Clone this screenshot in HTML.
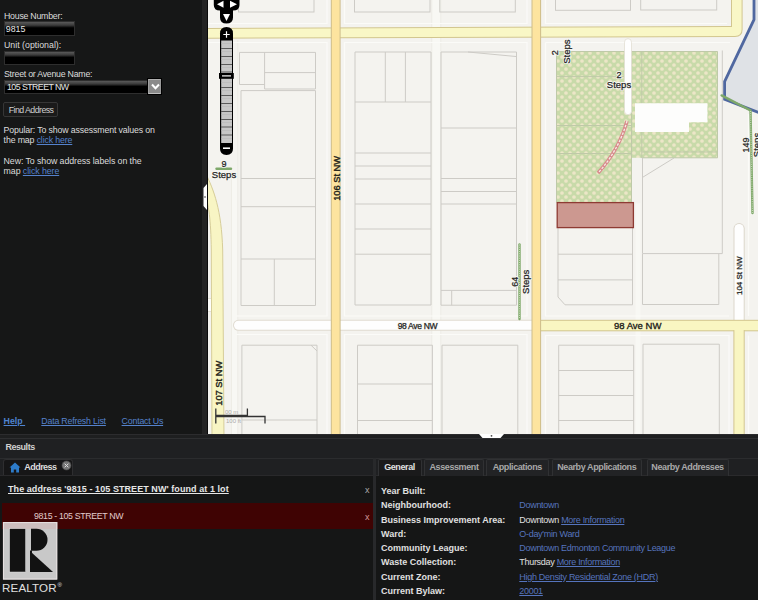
<!DOCTYPE html>
<html><head><meta charset="utf-8">
<style>
*{box-sizing:border-box}
html,body{margin:0;padding:0}
body{width:758px;height:600px;overflow:hidden;background:#1a1a1a;position:relative;font-family:"Liberation Sans",sans-serif;color:#d8d8d8}
.a{position:absolute;white-space:nowrap}
#left{position:absolute;left:0;top:0;width:202px;height:434px;background:#161717}
#sep{position:absolute;left:202px;top:0;width:6px;height:434px;background:#232323;border-right:1px solid #0a0a0a}
.lbl{font-size:8.8px;line-height:10px;color:#dcdcdc}
.inp{position:absolute;left:4px;width:71px;height:15px;border:1px solid #2e2e2e;background:linear-gradient(#5a5a5a 0,#3a3a3a 25%,#000 45%,#000 100%)}
.lnk{color:#5582cc;text-decoration:underline}
#map{position:absolute;left:208px;top:0}
#bottom{position:absolute;left:0;top:434px;width:758px;height:166px;background:#151515}
.tab{position:absolute;top:458.5px;height:17.5px;background:#222325;border:1px solid #303133;border-bottom:none;border-radius:2px 2px 0 0;font-size:9px;font-weight:bold;color:#a9a9a9;text-align:center;line-height:15px;letter-spacing:-0.4px}
.tab.act{background:#1a1a1b;color:#e0e0e0}
.det{font-size:9px;font-weight:bold;color:#e0e0e0;line-height:14.3px}
.val{font-size:9px;color:#e0e0e0;line-height:14.3px;letter-spacing:-0.3px}
.bl{color:#5574bd}
.u{text-decoration:underline}
</style></head><body>
<div id="left">
  <div class="a lbl" style="left:4px;top:11px;letter-spacing:-0.25px">House Number:</div>
  <div class="inp" style="top:20.5px;height:15px"></div>
  <div class="a lbl" style="left:5.8px;top:23.5px;color:#e8e8e8">9815</div>
  <div class="a lbl" style="left:4px;top:40px;letter-spacing:0px">Unit (optional):</div>
  <div class="inp" style="top:50.5px;height:14px"></div>
  <div class="a lbl" style="left:4px;top:69px;letter-spacing:-0.25px">Street or Avenue Name:</div>
  <div class="inp" style="top:80px;width:157px;height:14px"></div>
  <div class="a lbl" style="left:7px;top:82px;color:#e8e8e8;letter-spacing:-0.55px">105 STREET NW</div>
  <div class="a" style="left:148.4px;top:79px;width:12.7px;height:15.4px;background:#8a8a8a;border:1px solid #aaa;border-color:#b0b0b0 #9a9a9a #c0c0c0 #a0a0a0;box-shadow:0 0 0 1px #000"></div>
  <svg class="a" style="left:150.5px;top:83px" width="9" height="7"><path d="M1 1.5 L4.5 5.2 L8 1.5" stroke="#fff" stroke-width="2" fill="none"/></svg>
  <div class="a" style="left:3px;top:102px;width:54.5px;height:14.5px;border:1px solid #363636;background:#1a1a1a;border-radius:2px"></div>
  <div class="a lbl" style="left:8.7px;top:105px;color:#cfcfcf;letter-spacing:-0.55px">Find Address</div>
  <div class="a lbl" style="left:3.6px;top:125px;letter-spacing:-0.15px">Popular: To show assessment values on<br>the map <span class="lnk">click here</span></div>
  <div class="a lbl" style="left:3.6px;top:156px;letter-spacing:-0.08px">New: To show address labels on the<br>map <span class="lnk">click here</span></div>
  <div class="a lbl" style="left:3.6px;top:416px;color:#4f84d0;font-weight:bold;text-decoration:underline">Help&nbsp;</div>
  <div class="a lbl lnk" style="left:41.3px;top:416px;letter-spacing:-0.2px">Data Refresh List</div>
  <div class="a lbl lnk" style="left:121.6px;top:416px;letter-spacing:-0.2px">Contact Us</div>
</div>
<div id="sep"></div>
<svg class="a" style="left:202px;top:184px" width="6" height="26"><path d="M5 0 L1.5 4 L1.5 22 L5 26 Z" fill="#fff"/><circle cx="3" cy="13" r="0.8" fill="#333"/></svg>

<svg id="map" width="550" height="434" viewBox="208 0 550 434">
  <defs>
    <pattern id="park" x="556" y="51" width="8" height="8" patternUnits="userSpaceOnUse">
      <rect width="8" height="8" fill="#c8daa9"/>
      <circle cx="2" cy="2" r="1.85" fill="#ece6c7"/>
      <circle cx="6" cy="6" r="1.85" fill="#ece6c7"/>
    </pattern>
    <filter id="soft" x="-2%" y="-2%" width="104%" height="104%"><feGaussianBlur stdDeviation="0.45"/></filter>
    <clipPath id="parkclip"><rect x="556.5" y="51.2" width="161.2" height="151.2"/></clipPath>
    <pattern id="grip" x="0" y="0" width="2" height="2" patternUnits="userSpaceOnUse">
      <rect width="2" height="2" fill="#c4c4c4"/>
      <rect width="1" height="1" fill="#a8a8a8"/>
    </pattern>
  </defs>
  <rect x="208" y="0" width="550" height="434" fill="#f4f3ef"/>
  <!-- river/area top-right -->
  <path d="M754 -2 L754 19.7 L724.6 81.6 L724.6 99.3 L760 113 L760 -2 Z" fill="#dfe2e6" stroke="#5068a0" stroke-width="2.8"/>
  <!-- faint sidewalk / block edge lines -->
  <g fill="#f8f8f4">
    <rect x="232" y="176" width="5.5" height="258"/>
    <rect x="432" y="0" width="8.5" height="434"/>
    <rect x="635.5" y="157.8" width="5" height="276.2"/>
  </g>
  <g stroke="#ebe9e3" stroke-width="0.7" fill="none">
    <path d="M231.5 176 V434 M237.8 40 V434 M431.8 0 V434 M440.8 0 V434 "/>
  </g>
  <g stroke="#fbfbf8" stroke-width="1.2" fill="none">
    <path d="M208 23.5 H327 V0 M208 42.5 H327 V316 H236.5"/>
    <path d="M236.5 334.5 H327 V434"/>
    <path d="M344.5 0 V23.5 H527 V0 M344.5 42.5 H527 V316 H344.5 Z"/>
    <path d="M344.5 434 V334.5 H527 V434"/>
    <path d="M545.5 0 V23.5 H727 M545.5 42.5 H730 M545.5 42.5 V316 H729 M545.5 434 V335.5 H729 V434"/>
    <path d="M748.5 114 V316 M748.5 335.5 V434"/>
  </g>
  <!-- park -->
  <g clip-path="url(#parkclip)"><rect x="556.5" y="51.2" width="161.2" height="151.2" fill="url(#park)" filter="url(#soft)"/></g>
  <rect x="631.5" y="157.8" width="87.5" height="45.5" fill="#f4f3ef"/>
  <g stroke="#bfc9a8" stroke-width="1" fill="none">
    <path d="M556.5 51.5 H717.5 V157.8 H641.8 M556.5 76.6 H631.5 M556.5 125.5 H631.5 M556.5 153.5 H631.5 M641.8 51.5 V157.8 M631.5 51.5 V202.4 M641.8 152 H717.5 M556.5 51.5 V202.4"/>
  </g>
  <!-- white path in park -->
  <rect x="624.5" y="38.7" width="7" height="76" rx="3.5" fill="#fefefe" stroke="#e2ded3" stroke-width="0.8"/>
  <!-- building -->
  <path d="M635 103.2 H707.4 V122.2 H689 V131.9 H635 Z" fill="#fdfdfc"/>
  <!-- red dashed path -->
  <path d="M627 121 Q619 150 598 173" stroke="#d98a8c" stroke-width="3.4" fill="none"/>
  <path d="M627 121 Q619 150 598 173" stroke="#f6ece6" stroke-width="1.3" stroke-dasharray="2.5 1.5" fill="none"/>
  <!-- lot lines -->
  <g stroke="#cdcbc6" stroke-width="1" fill="none">
    <rect x="238.5" y="-2" width="75.5" height="14"/>
    <rect x="354.5" y="-2" width="75.5" height="14"/>
    <rect x="439.8" y="-2" width="75.5" height="14"/>
    <rect x="555.5" y="-2" width="75" height="12.3"/>
    <rect x="640.7" y="-2" width="76" height="12"/>
    <!-- col A -->
    <path d="M239.5 52.4 H315.5 V89 H264.6 V52.4 M239.5 52.4 V84.5 H264.6 M264.6 72.6 H315.5 M241 90.6 H315.5 M241 90.6 V305.5 H315.5 V90.6 M241 178.5 H315.5 M241 206.7 H315.5 M241 259 H315.5 M274.3 259 V305.5"/>
    <path d="M241.9 434 V345.2 H317 V434 M311 345.2 L317 351 M241.9 420 H317"/>
    <!-- col B -->
    <path d="M355 52 H431 V305 H355 Z M385.3 52 V102 M405.4 52 V102 M355 102 H431 M355 153 H431 M355 166 H431 M355 179 H431 M355 204 H431 M355 229 H431 M355 254.2 H431"/>
    <path d="M357.5 434 V345.2 H432.4 V434 M357.5 384 H432.4 M357.5 420.5 H432.4"/>
    <!-- col C -->
    <path d="M441 52 H516.5 V305.2 H441 Z M468 52 L516 56.5 M441 128 H516.5 M441 178.5 H516.5 M441 191.5 H516.5 M441 204 H516.5 M441 290.4 H516.5 M451.7 290.4 V305.2"/>
    <path d="M442 434 V345.2 H517.8 V434"/>
    <!-- col D below red -->
    <path d="M558 227.6 V297 L565 304.8 H632.5 V227.6 M558 254.2 H632.5 M558 279.9 H632.5"/>
    <path d="M558.7 434 V345.2 H633.7 V434 M558.7 370.5 H633.7 M558.7 395.5 H633.7 M558.7 420.5 H633.7"/>
    <!-- col E -->
    <path d="M642.5 157.8 V253.6 H722.3 V50.5 M642.5 177.4 L674 158 M642.5 254 V304.5 H718.8 V254"/>
    <path d="M643 434 V344.2 H719.3 V434"/>
  </g>
  <!-- red lot -->
  <rect x="557.2" y="202.6" width="76.2" height="25" fill="#cc9890" stroke="#8e3b33" stroke-width="1.3"/>
  <!-- roads: borders then fills -->
  <g>
    <!-- 98 Ave white -->
    <path d="M238.5 319.8 H535 V330.8 H238.5 A5.5 5.5 0 0 1 238.5 319.8 Z" fill="#e0dbd0"/>
    <path d="M238.5 320.8 H535 V329.8 H238.5 A4.5 4.5 0 0 1 238.5 320.8 Z" fill="#fefefe"/>
    <!-- 104 St white -->
    <rect x="733.5" y="223" width="11.2" height="110" rx="5.6" fill="#dcd7cc"/>
    <rect x="734.5" y="224" width="9.2" height="108" rx="4.6" fill="#fefefe"/>
    <rect x="205" y="298.5" width="8" height="13" fill="#fdfdfb" stroke="#e0dcd0" stroke-width="0.8"/>
    <!-- 107 St curved -->
    <path d="M205 172 C214 190 221.5 210 222.7 250 L224 440 L212 440 L211.3 250 C210.8 220 209 205 204 190 Z" fill="#f8f5c4" stroke="#d6cd98" stroke-width="1"/>
    <!-- top horizontal road with curve up -->
    <path d="M205 27.9 L731 25.9 V-3 H742.6 V29.5 Q742.6 36.9 735 36.9 L205 38.7 Z" fill="#d2c68f"/>
    <path d="M205 28.9 L732 26.9 V-3 H741.6 V29.5 Q741.6 35.9 735 35.9 L205 37.7 Z" fill="#f9f7c6"/>
    <!-- 98 Ave right yellow -->
    <rect x="538" y="319.8" width="225" height="11.5" fill="#d2c68f"/>
    <rect x="538" y="320.8" width="225" height="9.5" fill="#f9f6c2"/>
    <!-- bottom-right vertical -->
    <rect x="733.4" y="330.3" width="11.3" height="110" fill="#d2c68f"/>
    <rect x="734.4" y="329" width="9.3" height="111" fill="#f9f6c2"/>
    <!-- vertical primary roads -->
    <rect x="330.8" y="-3" width="9.8" height="440" fill="#cdbd8c"/>
    <rect x="331.8" y="-3" width="7.8" height="440" fill="#fde49f"/>
    <rect x="531.5" y="-3" width="9.6" height="440" fill="#cdbd8c"/>
    <rect x="532.5" y="-3" width="7.6" height="440" fill="#fde49f"/>
  </g>
  <!-- stairs -->
  <g stroke="#7ea86a" stroke-width="2.4" fill="none" stroke-linecap="round">
    <path d="M519.5 244.5 V319"/>
    <path d="M216.5 168.7 H231"/>
    <path d="M721.6 95.4 L750.5 110.5 L752.5 213"/>
  </g>
  <g stroke="#dfead0" stroke-width="0.8" stroke-dasharray="1 1.2" fill="none">
    <path d="M519.5 244.5 V319"/>
    <path d="M750.5 111 L752.5 213"/>
  </g>
  <!-- labels -->
  <defs>
  <g id="lbls" font-family="Liberation Sans, sans-serif">
    <text x="224" y="167" font-size="9" text-anchor="middle">9</text>
    <text x="224" y="178" font-size="9.5" text-anchor="middle">Steps</text>
    <text x="619" y="77.5" font-size="9" text-anchor="middle">2</text>
    <text x="619" y="88" font-size="9.5" text-anchor="middle">Steps</text>
    <g transform="translate(558 52.8) rotate(-90)"><text x="0" y="0" font-size="9" text-anchor="middle">2</text></g>
    <g transform="translate(569.8 51.6) rotate(-90)"><text x="0" y="0" font-size="9.5" text-anchor="middle">Steps</text></g>
    <g transform="translate(517.8 281.8) rotate(-90)"><text x="0" y="0" font-size="9" text-anchor="middle">64</text></g>
    <g transform="translate(528.7 281.8) rotate(-90)"><text x="0" y="0" font-size="9.5" text-anchor="middle">Steps</text></g>
    <g transform="translate(748.6 145) rotate(-90)"><text x="0" y="0" font-size="9" text-anchor="middle">149</text></g>
    <g transform="translate(760 145) rotate(-90)"><text x="0" y="0" font-size="9.5" text-anchor="middle">Steps</text></g>
    <g transform="translate(742.2 275.7) rotate(-90)"><text x="0" y="0" font-size="8" text-anchor="middle">104 St NW</text></g>
    <text x="417.5" y="329.3" font-size="8.5" text-anchor="middle" letter-spacing="-0.3">98 Ave NW</text>
  </g>
  </defs>
  <use href="#lbls" fill="#1f1f1f" stroke="#f7f7f2" stroke-width="1.8" stroke-linejoin="round"/>
  <use href="#lbls" fill="#1f1f1f" stroke="#1f1f1f" stroke-width="0.25"/>
  <g font-family="Liberation Sans, sans-serif">
    <g transform="translate(339.8 178.4) rotate(-90)"><text x="0" y="0" font-size="9.3" text-anchor="middle" fill="#23231a" stroke="#23231a" stroke-width="0.4">106 St NW</text></g>
    <g transform="translate(222 383.3) rotate(-90)"><text x="0" y="0" font-size="9.3" text-anchor="middle" fill="#23231a" stroke="#23231a" stroke-width="0.4">107 St NW</text></g>
    <text x="637.7" y="329.3" font-size="9.5" text-anchor="middle" fill="#23231a" stroke="#23231a" stroke-width="0.35">98 Ave NW</text>
  </g>
  <!-- scale bar -->
  <g stroke="#333" stroke-width="1.3" fill="none">
    <path d="M215.8 408.5 V423.5 M215.8 415.3 H247.4 V408.5 M215.8 416.5 H265 V423.5"/>
  </g>
  <text x="225" y="413.5" font-size="6" fill="#aaa" font-family="Liberation Sans, sans-serif">00 m</text>
  <text x="226" y="422.5" font-size="6" fill="#aaa" font-family="Liberation Sans, sans-serif">100 ft</text>
  <!-- pan control -->
  <g fill="#000">
    <path d="M213.8 -3 H239.5 V5 Q239.5 10.5 233 10.5 V17.5 Q233 23.5 226.5 23.5 Q220 23.5 220 17.5 V10.5 Q213.8 10.5 213.8 5 Z"/>
  </g>
  <g fill="#fff">
    <path d="M217 4.3 L223.5 0.8 V7.8 Z"/>
    <path d="M237 4.3 L230 0.8 V7.8 Z"/>
    <path d="M223 14 H230 L226.5 21 Z"/>
  </g>
  <!-- zoom bar -->
  <path d="M220 33.5 Q220 27 226.5 27 Q233 27 233 33.5 V148.5 Q233 155 226.5 155 Q220 155 220 148.5 Z" fill="#000"/>
  <rect x="221.2" y="40.5" width="10.8" height="102.5" fill="#c6c6c6"/>
  <g stroke="#5a5a5a" stroke-width="1">
    <path d="M221 48.5 H232 M221 56.5 H232 M221 64.5 H232 M221 72 H232 M221 87.5 H232 M221 95.5 H232 M221 103.5 H232 M221 111.5 H232 M221 119.5 H232 M221 127 H232 M221 135 H232"/>
  </g>
  <g stroke="#b4b4b4" stroke-width="0.5">
    <path d="M221 43.5 H232 M221 51.5 H232 M221 59.5 H232 M221 67.5 H232 M221 82.5 H232 M221 90.5 H232 M221 98.5 H232 M221 106.5 H232 M221 114.5 H232 M221 122.5 H232 M221 130.5 H232 M221 138.5 H232"/>
  </g>
  <rect x="219" y="73" width="14.8" height="5.8" fill="#000"/>
  <g stroke="#fff" stroke-width="1.2">
    <path d="M223.3 34.5 H229.7 M226.5 31.3 V37.7"/>
    <path d="M222 75.9 H231"/>
    <path d="M223 148.2 H230" stroke-width="1.6"/>
  </g>
</svg>

<div id="bottom">
  <div class="a" style="left:0;top:0;width:758px;height:1px;background:#2c2c2e"></div>
  <div class="a" style="left:0;top:1px;width:758px;height:3px;background:#1e1f20"></div>
  <div class="a" style="left:0;top:4px;width:758px;height:1px;background:#2e2f31"></div>
  <div class="a" style="left:0;top:5px;width:758px;height:37px;background:#1f2022"></div>
  <div class="a" style="left:0;top:24px;width:758px;height:1px;background:#2b2c2e"></div>
  <svg class="a" style="left:479px;top:0" width="25" height="5"><path d="M0 0 H25 L21.5 4 H3.5 Z" fill="#fff"/><circle cx="12.5" cy="1.8" r="0.9" fill="#444"/></svg>
  <div class="a" style="left:5.4px;top:8px;font-size:9px;font-weight:bold;color:#d0d0d0;letter-spacing:-0.45px">Results</div>
  <!-- left tab -->
  <div class="a" style="left:3px;top:25px;width:70px;height:17px;background:#161617;border:1px solid #2e2e30;border-bottom:none;border-radius:3px 3px 0 0"></div>
  <svg class="a" style="left:9px;top:28px" width="12" height="11"><path d="M6 0.5 L11.5 5.5 H10 V10.5 H7.2 V7.5 H4.8 V10.5 H2 V5.5 H0.5 Z" fill="#2d7bc9"/></svg>
  <div class="a" style="left:24.3px;top:28px;font-size:9px;font-weight:bold;color:#dcdcdc;letter-spacing:-0.55px">Address</div>
  <svg class="a" style="left:61px;top:25.5px" width="11" height="11"><circle cx="5.5" cy="5.5" r="4.5" fill="#767676" stroke="#4a4a4a" stroke-width="0.6"/><path d="M3.7 3.7 L7.3 7.3 M7.3 3.7 L3.7 7.3" stroke="#ddd" stroke-width="1"/></svg>
  <!-- separator -->
  <div class="a" style="left:373px;top:24px;width:3px;height:142px;background:#28292b"></div>
  <!-- left content -->
  <div class="a" style="left:0;top:41px;width:373px;height:1px;background:#29292b"></div><div class="a" style="left:0;top:42px;width:373px;height:124px;background:#151616"></div>
  <div class="a" style="left:8px;top:50px;font-size:9px;font-weight:bold;color:#e6e6e6;text-decoration:underline;letter-spacing:0.07px">The address '9815 - 105 STREET NW' found at 1 lot</div>
  <div class="a" style="left:365px;top:51px;font-size:9px;color:#aaa">x</div>
  <div class="a" style="left:2px;top:68.5px;width:371px;height:26.5px;background:#3f0303"></div>
  <div class="a" style="left:34px;top:77px;font-size:8.8px;color:#e2cccc;letter-spacing:-0.35px">9815 - 105 STREET NW</div>
  <div class="a" style="left:365px;top:78px;font-size:9px;color:#d49a9a">x</div>
  <!-- right content -->
  <div class="a" style="left:376px;top:42px;width:382px;height:124px;background:#151616"></div>
  <div class="a" style="left:376px;top:41px;width:382px;height:1px;background:#2a2a2c"></div>
</div>
<!-- right tabs -->
<div class="tab act" style="left:377.5px;width:44px">General</div>
<div class="tab" style="left:424px;width:60px">Assessment</div>
<div class="tab" style="left:486px;width:62.5px">Applications</div>
<div class="tab" style="left:551.5px;width:90.5px">Nearby Applications</div>
<div class="tab" style="left:646.5px;width:82px">Nearby Addresses</div>
<!-- details -->
<div class="a det" style="left:381px;top:484px">
<div>Year Built:</div><div>Neighbourhood:</div><div>Business Improvement Area:</div><div>Ward:</div><div>Community League:</div><div>Waste Collection:</div><div>Current Zone:</div><div>Current Bylaw:</div>
</div>
<div class="a val" style="left:519.3px;top:484px">
<div>&nbsp;</div><div><span class="bl">Downtown</span></div><div>Downtown <span class="bl u">More Information</span></div><div><span class="bl">O-day'min Ward</span></div><div><span class="bl">Downtown Edmonton Community League</span></div><div>Thursday <span class="bl u">More Information</span></div><div><span class="bl u">High Density Residential Zone (HDR)</span></div><div><span class="bl u">20001</span></div>
</div>
<!-- realtor logo -->
<svg class="a" style="left:0;top:518px" width="70" height="82">
  <rect x="2.9" y="4" width="54.4" height="57.6" fill="#c8c8c8"/><rect x="2.9" y="4" width="54.4" height="7" fill="#d0b8b8" opacity="0.6"/>
  <rect x="3.5" y="4.6" width="53.2" height="56.4" fill="none" stroke="#e6e0e0" stroke-width="1"/>
  <rect x="9.6" y="10.7" width="16" height="43.3" fill="#121212" stroke="#e0e0e0" stroke-width="0.5"/>
  <path d="M31 10.7 H36.5 A11 11 0 0 1 36.5 32.7 H31 Z" fill="#121212"/>
  <path d="M31 34 L31 54 H53 Z" fill="#121212"/>
  <path d="M31 32.5 V54" stroke="#121212" stroke-width="2"/>
  <text x="2" y="74" font-family="Liberation Sans, sans-serif" font-size="11.6" fill="#e0e0e0" letter-spacing="0.15">REALTOR</text>
  <text x="57.5" y="68.5" font-family="Liberation Sans, sans-serif" font-size="6" fill="#e0e0e0">&#174;</text>
</svg>

</body></html>
